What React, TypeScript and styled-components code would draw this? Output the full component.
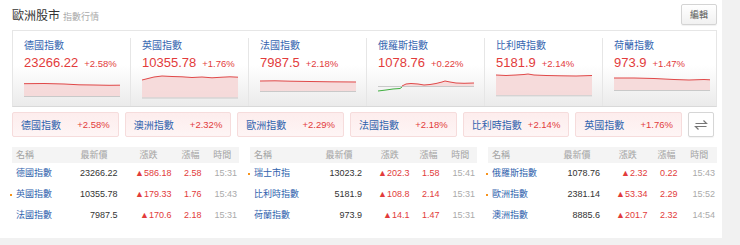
import React from 'react';
import styled, { createGlobalStyle } from 'styled-components';

const GlobalStyle = createGlobalStyle`
  html, body { margin: 0; padding: 0; background: #f1f1f1; }
  body { font-family: "Liberation Sans", "Noto Sans CJK TC", sans-serif; }
  * { box-sizing: border-box; }
`;

const RED = '#e23b3b';
const BLUE = '#2f62ad';

const Page = styled.div`
  width: 722px;
  height: 238px;
  padding: 0 5px 0 12px;
  background: #fff;
  display: flex;
  flex-direction: column;
`;

const Header = styled.div`
  display: flex;
  align-items: center;
  justify-content: space-between;
  height: 21px;
  margin-top: 4px;
  margin-bottom: 5px;
`;

const TitleWrap = styled.div`
  display: flex;
  align-items: baseline;
`;

const Title = styled.span`
  font-size: 12px;
  color: #333;
`;

const SubTitle = styled.span`
  font-size: 9px;
  color: #aaa;
  margin-left: 3px;
`;

const EditButton = styled.button`
  width: 36px;
  height: 21px;
  padding: 0;
  font-family: inherit;
  font-size: 9px;
  color: #555;
  background: linear-gradient(#ffffff, #f1f1f1);
  border: 1px solid #d4d4d4;
  border-radius: 2px;
  box-shadow: 0 1px 1px rgba(0, 0, 0, 0.06);
`;

const Panel = styled.div`
  display: grid;
  grid-template-columns: repeat(6, 1fr);
  height: 77px;
  padding-top: 7px;
  border: 1px solid #e6e6e6;
  border-bottom-color: #d9d9d9;
  background: linear-gradient(#ffffff 0%, #ffffff 45%, #ebebeb 100%);
`;

const Card = styled.div<{ $first?: boolean }>`
  padding: 1px 10px 0 ${(p) => (p.$first ? '11px' : '11px')};
  border-left: ${(p) => (p.$first ? 'none' : '1px solid #e6e6e6')};
  display: flex;
  flex-direction: column;
`;

const CardTitle = styled.div`
  font-size: 10px;
  line-height: 14px;
  color: #3565b0;
  white-space: nowrap;
`;

const CardValueRow = styled.div`
  display: flex;
  align-items: baseline;
  margin-top: 1.5px;
  line-height: 16px;
  white-space: nowrap;
`;

const CardValue = styled.span`
  font-size: 13px;
  color: ${RED};
`;

const CardPct = styled.span`
  font-size: 9.5px;
  color: ${RED};
  margin-left: 6px;
`;

const Spark = styled.svg`
  display: block;
  margin-top: 1.5px;
  width: 96px;
  height: 26px;
`;

const TabRow = styled.div`
  display: flex;
  gap: 6px;
  height: 25px;
  margin-top: 5px;
  padding-right: 3px;
`;

const Tab = styled.div`
  flex: 1;
  display: flex;
  align-items: center;
  justify-content: space-between;
  padding: 0 8px;
  background: linear-gradient(#fdeded, #fef5f5);
  border: 1px solid #f6dcdc;
  border-radius: 2px;
  white-space: nowrap;
`;

const TabName = styled.span`
  font-size: 10px;
  color: ${BLUE};
`;

const TabPct = styled.span`
  font-size: 9.5px;
  color: ${RED};
`;

const SwapButton = styled.div`
  width: 26px;
  flex: none;
  display: flex;
  align-items: center;
  justify-content: center;
  background: #fff;
  border: 1px solid #d6d6d6;
  border-radius: 2px;
  box-shadow: 0 1px 1px rgba(0, 0, 0, 0.05);
`;

const Tables = styled.div`
  display: grid;
  grid-template-columns: 227px 227px 229px;
  column-gap: 11px;
  margin-top: 10px;
`;

const Group = styled.div`
  display: flex;
  flex-direction: column;
`;

const HeadRow = styled.div<{ $cols: string }>`
  display: grid;
  grid-template-columns: ${(p) => p.$cols};
  height: 16px;
  line-height: 16px;
  background: #f4f4f4;
  font-size: 9px;
  color: #a3a3a3;
`;

const HeadCell = styled.div<{ $left?: boolean }>`
  text-align: ${(p) => (p.$left ? 'left' : 'center')};
  padding-left: ${(p) => (p.$left ? '4px' : '0')};
  white-space: nowrap;
`;

const Row = styled.div<{ $cols: string }>`
  display: grid;
  grid-template-columns: ${(p) => p.$cols};
  height: 21px;
  line-height: 21px;
  font-size: 9px;
  white-space: nowrap;
`;

const NameCell = styled.div`
  position: relative;
  padding-left: 4px;
  color: ${BLUE};
`;

const Dot = styled.span`
  position: absolute;
  left: -2px;
  top: 10px;
  width: 2px;
  height: 2px;
  background: #f7941d;
`;

const NumCell = styled.div<{ $color: string; $pad?: number }>`
  text-align: right;
  padding-right: ${(p) => (p.$pad ?? 4)}px;
  color: ${(p) => p.$color};
`;

type Pt = [number, number];

const toPath = (pts: Pt[]) => pts.map((p, i) => `${i ? 'L' : 'M'}${p[0]} ${p[1]}`).join(' ');

const Sparkline: React.FC<{ red: Pt[]; green?: Pt[]; base: number }> = ({ red, green, base }) => {
  const area = `${toPath(red)} L${red[red.length - 1][0]} ${base} L${red[0][0]} ${base} Z`;
  return (
    <Spark viewBox="0 0 96 26">
      <path d={area} fill="#f6d6d6" opacity={0.85} />
      <line x1="0" y1={base + 0.5} x2="96" y2={base + 0.5} stroke="#c9c9c9" strokeWidth="1" />
      <path d={toPath(red)} fill="none" stroke="#e04848" strokeWidth="1" />
      {green && <path d={toPath(green)} fill="none" stroke="#3fae3f" strokeWidth="1" />}
    </Spark>
  );
};

const cards: { name: string; value: string; pct: string; red: Pt[]; green?: Pt[]; base: number }[] = [
  {
    name: '德國指數', value: '23266.22', pct: '+2.58%', base: 23,
    red: [[0, 10.7], [20, 10.5], [40, 11], [55, 11.8], [70, 12], [85, 12.3], [96, 12.2]],
  },
  {
    name: '英國指數', value: '10355.78', pct: '+1.76%', base: 24.5,
    red: [[0, 7], [6, 5.5], [12, 4], [20, 3], [30, 3.5], [40, 3.8], [50, 4.5], [60, 4], [70, 4.8], [80, 4.2], [88, 3.8], [96, 4.2]],
  },
  {
    name: '法國指數', value: '7987.5', pct: '+2.18%', base: 18,
    red: [[0, 8], [15, 7.8], [30, 8.2], [50, 8.5], [70, 8.8], [96, 9]],
  },
  {
    name: '俄羅斯指數', value: '1078.76', pct: '+0.22%', base: 13,
    green: [[0, 18], [8, 17], [15, 16], [22, 15.5], [24, 14]],
    red: [[24, 13], [28, 11], [33, 10.5], [40, 11], [46, 12], [52, 11.5], [58, 10.5], [64, 9], [67, 8], [72, 9], [78, 10], [86, 10.3], [96, 10]],
  },
  {
    name: '比利時指數', value: '5181.9', pct: '+2.14%', base: 22.3,
    red: [[0, 2], [10, 2.5], [20, 2], [28, 1.5], [32, 1], [38, 2], [50, 2.5], [65, 2.8], [80, 3], [96, 2.5]],
  },
  {
    name: '荷蘭指數', value: '973.9', pct: '+1.47%', base: 17,
    red: [[0, 5], [20, 5], [40, 5.5], [60, 6.5], [75, 7], [90, 6.5], [96, 6.8]],
  },
];

const tabs = [
  ['德國指數', '+2.58%'],
  ['澳洲指數', '+2.32%'],
  ['歐洲指數', '+2.29%'],
  ['法國指數', '+2.18%'],
  ['比利時指數', '+2.14%'],
  ['英國指數', '+1.76%'],
];

type RowData = { name: string; price: string; chg: string; pct: string; time: string; dot?: boolean };

const groups: { cols: string; rows: RowData[] }[] = [
  {
    cols: '54.5px 55px 54px 30px 1fr',
    rows: [
      { name: '德國指數', price: '23266.22', chg: '▲586.18', pct: '2.58', time: '15:31' },
      { name: '英國指數', price: '10355.78', chg: '▲179.33', pct: '1.76', time: '15:43', dot: true },
      { name: '法國指數', price: '7987.5', chg: '▲170.6', pct: '2.18', time: '15:31' },
    ],
  },
  {
    cols: '62px 54px 47.5px 30px 1fr',
    rows: [
      { name: '瑞士市指', price: '13023.2', chg: '▲202.3', pct: '1.58', time: '15:41', dot: true },
      { name: '比利時指數', price: '5181.9', chg: '▲108.8', pct: '2.14', time: '15:31' },
      { name: '荷蘭指數', price: '973.9', chg: '▲14.1', pct: '1.47', time: '15:31' },
    ],
  },
  {
    cols: '62px 54px 47.5px 30px 1fr',
    rows: [
      { name: '俄羅斯指數', price: '1078.76', chg: '▲2.32', pct: '0.22', time: '15:43', dot: true },
      { name: '歐洲指數', price: '2381.14', chg: '▲53.34', pct: '2.29', time: '15:52', dot: true },
      { name: '澳洲指數', price: '8885.6', chg: '▲201.7', pct: '2.32', time: '14:54' },
    ],
  },
];

const SwapIcon = () => (
  <svg width="14" height="12" viewBox="0 0 14 12" fill="none" stroke="#777" strokeWidth="1.2">
    <path d="M1.5 4.5 H12.5 L9.5 1.5" />
    <path d="M12.5 7.5 H1.5 L4.5 10.5" />
  </svg>
);

export default function App() {
  return (
    <>
      <GlobalStyle />
      <Page>
        <Header>
          <TitleWrap>
            <Title>歐洲股市</Title>
            <SubTitle>指數行情</SubTitle>
          </TitleWrap>
          <EditButton>編輯</EditButton>
        </Header>
        <Panel>
          {cards.map((c, i) => (
            <Card key={c.name} $first={i === 0}>
              <CardTitle>{c.name}</CardTitle>
              <CardValueRow>
                <CardValue>{c.value}</CardValue>
                <CardPct>{c.pct}</CardPct>
              </CardValueRow>
              <Sparkline red={c.red} green={c.green} base={c.base} />
            </Card>
          ))}
        </Panel>
        <TabRow>
          {tabs.map(([n, p]) => (
            <Tab key={n}>
              <TabName>{n}</TabName>
              <TabPct>{p}</TabPct>
            </Tab>
          ))}
          <SwapButton>
            <SwapIcon />
          </SwapButton>
        </TabRow>
        <Tables>
          {groups.map((g, gi) => (
            <Group key={gi}>
              <HeadRow $cols={g.cols}>
                <HeadCell $left>名稱</HeadCell>
                <HeadCell>最新價</HeadCell>
                <HeadCell>漲跌</HeadCell>
                <HeadCell>漲幅</HeadCell>
                <HeadCell>時間</HeadCell>
              </HeadRow>
              {g.rows.map((r) => (
                <Row key={r.name} $cols={g.cols}>
                  <NameCell>
                    {r.dot && <Dot />}
                    {r.name}
                  </NameCell>
                  <NumCell $color="#333">{r.price}</NumCell>
                  <NumCell $color={RED}>{r.chg}</NumCell>
                  <NumCell $color={RED}>{r.pct}</NumCell>
                  <NumCell $color="#aaa" $pad={2}>{r.time}</NumCell>
                </Row>
              ))}
            </Group>
          ))}
        </Tables>
      </Page>
    </>
  );
}
